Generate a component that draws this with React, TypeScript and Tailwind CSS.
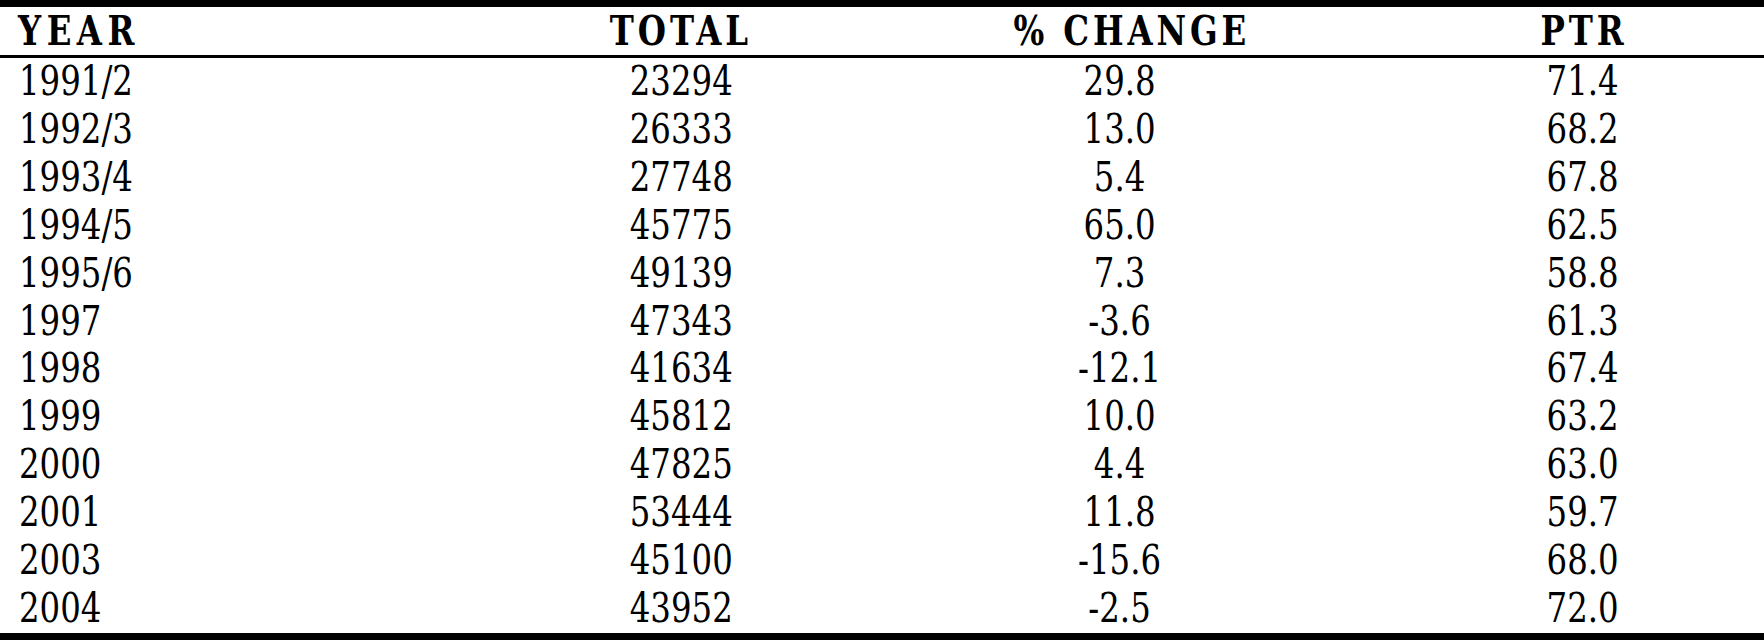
const rows: [string, string, string, string][] = [
  ['1991/2', '23294', '29.8', '71.4'],
  ['1992/3', '26333', '13.0', '68.2'],
  ['1993/4', '27748', '5.4', '67.8'],
  ['1994/5', '45775', '65.0', '62.5'],
  ['1995/6', '49139', '7.3', '58.8'],
  ['1997', '47343', '-3.6', '61.3'],
  ['1998', '41634', '-12.1', '67.4'],
  ['1999', '45812', '10.0', '63.2'],
  ['2000', '47825', '4.4', '63.0'],
  ['2001', '53444', '11.8', '59.7'],
  ['2003', '45100', '-15.6', '68.0'],
  ['2004', '43952', '-2.5', '72.0'],
];

const cols = 'grid grid-cols-[524px_314px_564px_1fr]';

const Txt = ({ children, left }: { children: string; left?: boolean }) => (
  <span className={`inline-block scale-x-[0.79] ${left ? 'origin-left' : 'origin-center'}`}>
    {children}
  </span>
);

export default function App() {
  return (
    <div
      className="w-[1764px] h-[640px] bg-white text-black text-[41px] border-t-[7px] border-b-[7px] border-black"
      style={{ fontFamily: '"DejaVu Serif", serif' }}
    >
      <div className={`${cols} h-[51px] leading-[48px] border-b-[3px] border-black font-bold tracking-[0.12em]`}>
        <div className="pl-[18px] tracking-[0.17em]">
          <Txt left>YEAR</Txt>
        </div>
        <div className="text-center">
          <Txt>TOTAL</Txt>
        </div>
        <div className="text-center pl-[24px]">
          <Txt>% CHANGE</Txt>
        </div>
        <div className="text-center pl-[2px]">
          <Txt>PTR</Txt>
        </div>
      </div>
      {rows.map((r) => (
        <div key={r[0]} className={`${cols} h-[47.92px] leading-[47.92px]`}>
          <div className="pl-[19px]">
            <Txt left>{r[0]}</Txt>
          </div>
          <div className="text-center">
            <Txt>{r[1]}</Txt>
          </div>
          <div className="text-center">
            <Txt>{r[2]}</Txt>
          </div>
          <div className="text-center">
            <Txt>{r[3]}</Txt>
          </div>
        </div>
      ))}
    </div>
  );
}
